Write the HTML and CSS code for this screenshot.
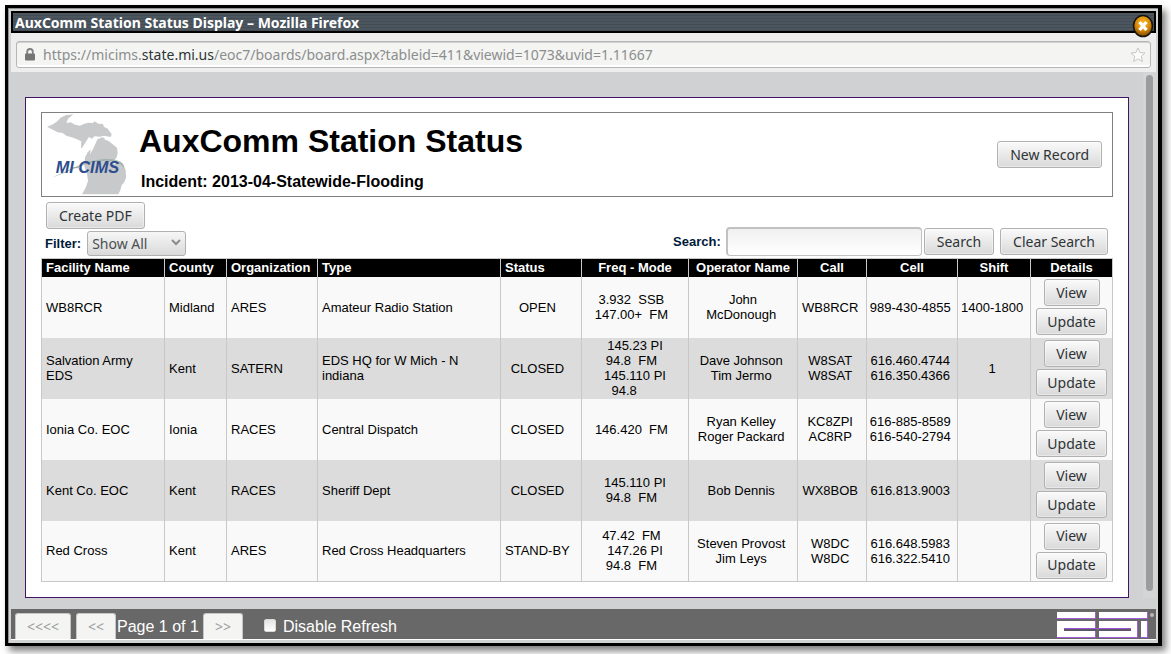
FILE: index.html
```html
<!DOCTYPE html>
<html lang="en">
<head>
<meta charset="utf-8">
<title>AuxComm Station Status Display</title>
<link rel="stylesheet" href="styles.css">
</head>
<body>
<div class="window">
  <header class="titlebar">
    <h2 class="titlebar-text">AuxComm Station Status Display – Mozilla Firefox</h2>
    <button class="close" type="button" aria-label="Close">
      <svg viewBox="0 0 22 24" width="22" height="24">
        <defs><radialGradient id="orb" cx=".5" cy=".35" r=".6"><stop offset="0" stop-color="#ffb81c"/><stop offset=".6" stop-color="#d98c0c"/><stop offset="1" stop-color="#8a5200"/></radialGradient></defs>
        <ellipse cx="11" cy="12" rx="9.5" ry="10.5" fill="url(#orb)" stroke="#16130c" stroke-width="1.6"/>
        <path d="M7.500 8l7 8M14.500 8l-7 8" stroke="#fff" stroke-width="3.400"/>
      </svg>
    </button>
  </header>
  <div class="toolbar">
    <div class="address">
      <svg class="lock" viewBox="0 0 10 13" width="10" height="13"><path d="M2.200 6V3.800a2.800 2.800 0 0 1 5.600 0V6" fill="none" stroke="#808080" stroke-width="1.800"/><rect y="5.500" width="10" height="7" rx="1" fill="#757575"/></svg>
      <span class="url">https://micims.<b>state.mi.us</b>/eoc7/boards/board.aspx?tableid=411&amp;viewid=1073&amp;uvid=1.11667</span>
      <svg class="star" viewBox="0 0 16 16" width="16" height="16"><path d="M8 1l2 4.500 5 .5-3.700 3.300 1.100 5.200L8 12l-4.400 2.500 1.100-5.200L1 6l5-.5z" fill="#fbfbfb" stroke="#c6c8c8" stroke-linejoin="round"/></svg>
    </div>
  </div>
  <div class="viewport">
    <main class="panel">
      <section class="banner">
        <svg class="logo" viewBox="45 40 243 246" width="81" height="82" role="img" aria-label="MI CIMS">
          <g fill="#c8c9cb">
            <path d="M48 78l18-7 13-9 10-11 15-7 23-3-16 13-5 13 13-2 13 7 15 3 13-6 12-3 14 1 4-5 14 8 11-1 4 9 11 6 12 17-3 8-21-4-10 3-17-1-9 7-8-5-6 9-8 13-7 11-3-1 1-19-13-6-9-4-23-7-11-8-15-2z"/>
            <path d="M153 281l11-20 7-20-3-22-8-22 2-27 8-15 9-9-2 15 9-16 8-17 6-14 16 1 17 6 12 10 13 10 2 16-3 13-10 14 2 7 18-9 10 8 7 19 1 22-5 13-8 10-4 15-6 12z"/>
            <path d="M204 113l12-3 7 5-10 3z"/>
          </g>
          <path d="M54 233c55-18 105-57 173-58 37 0 53 12 52 30-5-17-24-25-52-25-64 0-113 35-173 53z" fill="#94aaa0" opacity=".75"/>
          <text class="logo-text" x="74" y="217">MI CIMS</text>
          <path d="M126 201h20" stroke="#94aaa0" stroke-width="3"/>
        </svg>
        <div class="heading">
          <h1>AuxComm Station Status</h1>
          <p>Incident: 2013-04-Statewide-Flooding</p>
        </div>
        <button class="btn" type="button">New Record</button>
      </section>
      <div class="tools">
        <div class="left">
          <button class="btn" type="button">Create PDF</button>
          <div class="field">
            <label for="filter">Filter:</label>
            <span class="select"><select id="filter"><option>Show All</option></select>
            <svg viewBox="0 0 10 7" width="10" height="7"><path d="M1 1l4 4 4-4" fill="none" stroke="#8b8d8d" stroke-width="2"/></svg></span>
          </div>
        </div>
        <form class="search">
          <label for="q">Search:</label>
          <input id="q" type="text">
          <button class="btn" type="button">Search</button>
          <button class="btn clear" type="button">Clear Search</button>
        </form>
      </div>
      <table>
        <colgroup><col class="c1"><col class="c2"><col class="c3"><col class="c4"><col class="c5"><col class="c6"><col class="c7"><col class="c8"><col class="c9"><col class="c10"><col class="c11"></colgroup>
        <thead><tr><th class="l">Facility Name</th><th class="l">County</th><th class="l">Organization</th><th class="l">Type</th><th class="l">Status</th><th>Freq - Mode</th><th>Operator Name</th><th>Call</th><th>Cell</th><th>Shift</th><th>Details</th></tr></thead>
        <tbody>
          <tr><td class="l">WB8RCR</td><td class="l">Midland</td><td class="l">ARES</td><td class="l">Amateur Radio Station</td><td>OPEN&nbsp;&nbsp;</td><td>3.932&nbsp; SSB&nbsp;&nbsp;<br>147.00+&nbsp; FM&nbsp;&nbsp;</td><td>John<br>McDonough&nbsp;</td><td>WB8RCR&nbsp;</td><td>989-430-4855&nbsp;</td><td>1400-1800&nbsp;</td><td><div class="actions"><button class="btn" type="button">View</button><button class="btn" type="button">Update</button></div></td></tr>
          <tr><td class="l">Salvation Army<br>EDS</td><td class="l">Kent</td><td class="l">SATERN</td><td class="l">EDS HQ for W Mich - N<br>indiana</td><td>CLOSED&nbsp;&nbsp;</td><td>145.23 PI<br>94.8&nbsp; FM&nbsp;&nbsp;<br>145.110 PI<br>94.8&nbsp;&nbsp;&nbsp;&nbsp;&nbsp;&nbsp;</td><td>Dave Johnson&nbsp;<br>Tim Jermo&nbsp;</td><td>W8SAT&nbsp;<br>W8SAT&nbsp;</td><td>616.460.4744&nbsp;<br>616.350.4366&nbsp;</td><td>1&nbsp;</td><td><div class="actions"><button class="btn" type="button">View</button><button class="btn" type="button">Update</button></div></td></tr>
          <tr><td class="l">Ionia Co. EOC</td><td class="l">Ionia</td><td class="l">RACES</td><td class="l">Central Dispatch</td><td>CLOSED&nbsp;&nbsp;</td><td>146.420&nbsp; FM&nbsp;&nbsp;</td><td>Ryan Kelley&nbsp;<br>Roger Packard&nbsp;</td><td>KC8ZPI&nbsp;<br>AC8RP&nbsp;</td><td>616-885-8589&nbsp;<br>616-540-2794&nbsp;</td><td></td><td><div class="actions"><button class="btn" type="button">View</button><button class="btn" type="button">Update</button></div></td></tr>
          <tr><td class="l">Kent Co. EOC</td><td class="l">Kent</td><td class="l">RACES</td><td class="l">Sheriff Dept</td><td>CLOSED&nbsp;&nbsp;</td><td>145.110 PI<br>94.8&nbsp; FM&nbsp;&nbsp;</td><td>Bob Dennis&nbsp;</td><td>WX8BOB&nbsp;</td><td>616.813.9003&nbsp;</td><td></td><td><div class="actions"><button class="btn" type="button">View</button><button class="btn" type="button">Update</button></div></td></tr>
          <tr><td class="l">Red Cross</td><td class="l">Kent</td><td class="l">ARES</td><td class="l">Red Cross Headquarters</td><td>STAND-BY&nbsp;&nbsp;</td><td>47.42&nbsp; FM&nbsp;&nbsp;<br>147.26 PI<br>94.8&nbsp; FM&nbsp;&nbsp;</td><td>Steven Provost&nbsp;<br>Jim Leys&nbsp;</td><td>W8DC&nbsp;<br>W8DC&nbsp;</td><td>616.648.5983&nbsp;<br>616.322.5410&nbsp;</td><td></td><td><div class="actions"><button class="btn" type="button">View</button><button class="btn" type="button">Update</button></div></td></tr>
        </tbody>
      </table>
    </main>
    <div class="scrollbar"><div class="thumb"></div></div>
  </div>
  <footer class="pager">
    <button class="page wide" type="button" disabled>&lt;&lt;&lt;&lt;</button>
    <button class="page" type="button" disabled>&lt;&lt;</button>
    <span class="count">Page 1 of 1</span>
    <button class="page" type="button" disabled>&gt;&gt;</button>
    <label class="refresh"><input type="checkbox">Disable Refresh</label>
    <svg class="brand" viewBox="0 0 99 28" width="99" height="28" role="img" aria-label="ESi">
      <path fill="#fff" d="M0 1h38v6H0zM42 1h48v6H42zM0 10h38v16H0zM42 10h38v16H42zM84 10h6v16h-6z"/>
      <path fill="none" stroke="#a35fdb" d="M0 7.500h38.500V1M42 7.500h48.500V1M0 26.500h38.500V10M42 26.500h38.500V10M84 26.500h6.500V10"/>
      <path fill="#5f5668" d="M7 17h32v3H7zM42 17h32v3H42z"/><path stroke="#9b55d6" d="M7 17.500h67"/>
      <circle cx="95" cy="4" r="2" fill="#b9b9b9"/>
    </svg>
  </footer>
</div>
</body>
</html>
```
FILE: styles.css
```css
* { box-sizing: border-box; }
body {
  margin: 0;
  min-height: 100vh;
  padding: 5px 9px 9px 5px;
  display: flex;
  background: #fff;
  color: #000;
  font: 13px/15px "Liberation Sans", Arial, sans-serif;
}
h1, h2, p { margin: 0; }
.window {
  flex: 1;
  display: flex;
  flex-direction: column;
  padding: 3px 2px 3px 3px;
  border: 3px solid #000;
  border-right-width: 4px;
  background: #d2d4d3;
  box-shadow: inset 1px 1px #8f9190, 4px 5px 7px rgba(0, 0, 0, .5);
}
.titlebar {
  position: relative;
  height: 22px;
  border: 2px solid #000;
  background: repeating-linear-gradient(#4c565f 0 2px, #434c55 2px 3px);
}
.titlebar-text {
  padding-left: 2px;
  color: #fff;
  font: bold 14px/20px "Noto Sans", "Open Sans", sans-serif;
}
.close {
  position: absolute;
  top: 1px;
  right: 0;
  padding: 0;
  border: 0;
  background: none;
}
.close svg { display: block; }
.toolbar {
  padding: 8px 5px 4px;
  background: #eeeeee;
}
.address {
  display: flex;
  align-items: center;
  height: 27px;
  padding: 0 4px 0 8px;
  border: 1px solid #b4b7b5;
  border-radius: 3px;
  background: #f4f4f2;
  box-shadow: inset 0 1px #d0d1d0, inset 0 -2px #fff;
}
.url {
  flex: 1;
  padding-left: 8px;
  color: #8b8e8e;
  font: 14px/20px "Noto Sans", "Open Sans", sans-serif;
}
.url b { color: #2e3436; font-weight: normal; }
.viewport {
  flex: 1;
  display: flex;
  align-items: stretch;
  padding: 0 0 11px 14px;
  background: #d0d1d3;
}
.panel {
  flex: 1;
  margin-top: 25px;
  padding: 14px 15px 15px;
  border: 1px solid #431463;
  background: #fff;
}
.scrollbar {
  width: 13px;
  margin-left: 14px;
  padding: 3px 3px 7px;
  background: #d5d5d5;
}
.thumb {
  width: 7px;
  height: 100%;
  border-radius: 4px;
  background: #9b9c9e;
}
.banner {
  display: flex;
  align-items: center;
  height: 85px;
  padding: 0 10px 0 4px;
  border: 1px solid #808080;
}
.logo-text {
  fill: #2d4d8e;
  font: italic bold 49px "Liberation Sans", Arial, sans-serif;
}
.heading { flex: 1; padding: 3px 0 0 12px; }
h1 { font-size: 32px; line-height: 38px; }
.heading p {
  margin-top: 13px;
  padding-left: 2px;
  font-size: 16px;
  font-weight: bold;
  line-height: 18px;
}
.btn {
  height: 27px;
  padding: 0 12px;
  border: 1px solid #b0b2b0;
  border-radius: 3px;
  background: linear-gradient(#fafafa, #d9d9d9);
  box-shadow: inset 0 0 0 1px rgba(255, 255, 255, .4);
  color: #2e3436;
  font: 14px/20px "Noto Sans", "Open Sans", sans-serif;
  white-space: nowrap;
}
.tools {
  display: flex;
  justify-content: space-between;
  align-items: flex-end;
  height: 61px;
  padding: 0 5px 2px 4px;
}
.left .btn { margin-left: 1px; display: block; }
.field, .search { display: flex; align-items: center; }
.field { margin-top: 2px; }
.tools label { color: #001a3a; font-weight: bold; }
.select { position: relative; margin-left: 6px; }
.select svg { position: absolute; right: 5px; top: 8px; pointer-events: none; }
select {
  display: block;
  appearance: none;
  width: 99px;
  height: 25px;
  padding: 0 4px;
  border: 1px solid #b0b2b0;
  border-radius: 3px;
  background: linear-gradient(#f6f6f6, #dadada);
  color: #4a4f51;
  font: 14px/20px "Noto Sans", "Open Sans", sans-serif;
}
.search input {
  width: 196px;
  height: 29px;
  margin: 0 2px 0 5px;
  border: 2px solid #c0c1c0;
  border-width: 2px 1px 1px 2px;
  border-radius: 4px;
  background: linear-gradient(#f0f0f0, #fff);
}
.search .clear { margin-left: 6px; }
table {
  width: 100%;
  table-layout: fixed;
  border-collapse: collapse;
  border: 1px solid #c8c8c8;
}
.c1 { width: 123px; } .c2 { width: 62px; } .c3 { width: 91px; }
.c4 { width: 183px; } .c5 { width: 81px; } .c6 { width: 107px; }
.c7 { width: 109px; } .c8 { width: 69px; } .c9 { width: 91px; }
.c10 { width: 73px; } .c11 { width: 82px; }
th {
  height: 18px;
  padding: 0;
  border-right: 1px solid #c8c8c8;
  background: #000;
  color: #fff;
  white-space: nowrap;
}
td {
  height: 61px;
  padding: 0;
  border-right: 1px solid #c8c8c8;
  text-align: center;
  white-space: nowrap;
}
.l { padding-left: 4px; text-align: left; }
tbody tr { background: #f9f9f9; }
tbody tr:nth-child(even) { background: #dcdcdc; }
.actions { display: flex; flex-direction: column; align-items: center; gap: 2px; }
.actions .btn { min-width: 56px; padding: 0 10px; }
.pager {
  display: flex;
  align-items: flex-end;
  height: 31px;
  padding-left: 4px;
  border-bottom: 1px solid #fff;
  background: #686868;
  color: #fff;
  font-size: 16px;
}
.page {
  width: 40px;
  height: 26px;
  padding: 0;
  border: 1px solid #c5c6c5;
  border-bottom: 0;
  border-radius: 3px 3px 0 0;
  background: #f4f4f2;
  color: #9a9c9c;
  font: 14px/20px "Noto Sans", "Open Sans", sans-serif;
}
.wide { width: 56px; margin-right: 5px; }
.count { width: 87px; padding-left: 1px; line-height: 25px; white-space: nowrap; }
.refresh { display: flex; align-items: center; flex: 1; padding-left: 21px; line-height: 25px; }
.refresh input {
  appearance: none;
  width: 12px;
  height: 13px;
  margin: 0 7px 2px 0;
  border: 1px solid #d8d8d4;
  border-radius: 2px;
  background: linear-gradient(#e4e4e4, #fff);
}
```
